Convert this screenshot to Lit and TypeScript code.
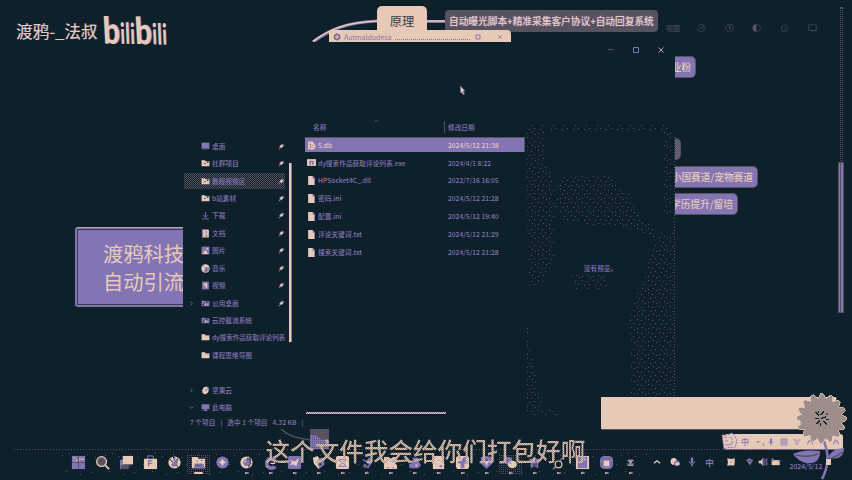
import { LitElement, html, css, svg, nothing } from "lit";
import { customElement, property } from "lit/decorators.js";
import { classMap } from "lit/directives/class-map.js";

const C = "#e6cab7";
const P = "#8374b4";
const G = "#56525f";
const D = "#0e212b";

const glyphs: Record<string, unknown> = {
  desktop: svg`<path fill=${P} d="M1 1h14v11H1z"/><path fill=${C} d="M3 3h1.500v1.500H3z"/><path stroke=${G} d="M2 13h12"/>`,
  folder: svg`<path fill=${C} d="M1 2h6l1 2h7v9H1z"/><path fill=${P} d="M10 4h5v1.5h-5zM14 12h1v1h-1z"/><path fill=${D} d="M6 7h2v2H6zM11 5h2v2h-2z"/>`,
  folderPlain: svg`<path fill=${C} d="M1 2h6l1 2h7v9H1z"/><path fill=${P} d="M8 4h7v1.5H8z"/>`,
  folderDim: svg`<path fill=${P} d="M1 3h6l1 1h7v9H1z"/><path fill=${D} d="M5 6h2v2H5zM9 5h2v2H9zM3 9h2v2H3z"/><path fill=${C} d="M7 8h2v3H7zM11 9h1v2h-1z"/>`,
  download: svg`<path fill="none" stroke=${P} stroke-width="1.5" d="M8 1v10M4 7l4 4 4-4M2 14h12"/>`,
  doc: svg`<path fill=${C} d="M2 1h12v14H2z"/><path fill=${P} d="M2 1h2v14H2zM8 4h3v2H8zM8 8h3v1H8z"/><path fill=${G} d="M8 11h3v2H8z"/>`,
  picture: svg`<path fill=${P} d="M1 1h14v14H1z"/><path fill=${C} d="M2 14l6-7 5 7zM10 3h3v3h-3z"/>`,
  music: svg`<circle cx="8" cy="8" r="7.500" fill=${C}/><path fill=${P} d="M8 8l6-3v6l-5 4H5zM4 3h2v2H4z"/><path fill=${D} d="M8 6h2v2H8zM5 10h1v1H5z"/>`,
  video: svg`<path fill=${P} d="M2 1h12v14H2z"/><path fill=${C} d="M5 4h6v8H8V8H5z"/>`,
  nut: svg`<path fill=${C} d="M5 2l6-1 3 4-1 6-5 4-5-2-1-5z"/><path fill=${P} d="M10 2h3l1 5-2-1z"/><path fill=${D} d="M8 6h2v2H8z"/>`,
  pc: svg`<path fill=${P} d="M1 2h14v9h-5v2h2v1H4v-1h2v-2H1z"/>`,
  file: svg`<path fill=${C} d="M2 0h8l4 4v12H2z"/><path fill=${P} d="M10 0l4 4v12h-1.3V5H10z"/>`,
  exe: svg`<path fill=${C} d="M0 2h16v12H0z"/><path fill=${P} d="M4 5h8v7H4z"/><path fill=${C} d="M7 8h2v4H7z"/>`,
  db: svg`<path fill=${C} d="M2 1h8l3 4v10H2z"/><circle cx="10" cy="9" r="5" fill=${C}/><path fill=${G} d="M5 5h2v2H5zM9 7h2v1H9zM6 9h2v2H6zM10 11h2v1h-2z"/><path fill=${P} d="M4 12h2v1H4zM12 5h1v2h-1z"/>`,
  start: svg`<path fill=${P} d="M1 1h14v14H1z"/><path fill=${C} d="M3 2h1v2H3zM5 5h2v1H5zM9 3h1v3H9zM11 4h3v1h-3zM3 6h1v1H3z"/><path stroke=${G} d="M8 1v14M1 8h14"/>`,
  search: svg`<circle cx="7" cy="7" r="5.2" fill=${G} stroke=${C} stroke-width="1.4"/><path stroke=${C} stroke-width="2" d="M11 11l4 4"/>`,
  tasks: svg`<path fill=${P} d="M1 5h9v10H1z"/><path fill=${G} d="M2 11h8v4H2z"/><path fill=${C} d="M4 1h11v9H4z"/><path fill=${G} d="M4 10h8v2H4z"/>`,
  store: svg`<path fill="none" stroke=${P} d="M5 4V1h6v3"/><path fill=${C} d="M1 4h14v11H1z"/><path fill="none" stroke=${P} stroke-width="1.3" d="M6 12V6h4M6 9h4"/>`,
  globe: svg`<circle cx="8" cy="8" r="6.5" fill=${C}/><path fill=${P} d="M7 1h2v5l3-1-1 6-4 2-3-3 3-2z"/><path stroke=${D} d="M3 4l3 4M7 1v3M12 3l-2 3M10 11l2 2"/>`,
  explorer: svg`<path fill=${C} d="M1 2h6l1 2h7v10H1z"/><path fill=${P} d="M4 9h9l2 5H3z"/><path stroke=${G} d="M5 11h6"/><path fill=${D} d="M6 6h1v1H6zM11 5h1v1h-1z"/>`,
  diamond: svg`<circle cx="8" cy="8" r="6.5" fill=${P}/><path fill=${C} d="M8 4l1.500 2.500L12 8 9.500 9 8 12 6.500 9 4 8l2.500-1.500z"/>`,
  chrome: svg`<circle cx="8" cy="8" r="6.5" fill=${C}/><path fill=${G} d="M8 3h5v6l-3 5z"/><circle cx="8" cy="8" r="3.6" fill=${P}/><circle cx="6.500" cy="7" r="1" fill=${C}/>`,
  edge: svg`<path fill="none" stroke=${P} stroke-width="4" d="M13 12A5 5 0 1 1 13 6"/><path fill=${C} d="M8 8h5v1.500H8zM3 12h2v1H3z"/><path fill=${D} d="M9 7h3v1H9z"/>`,
  bird: svg`<rect x="1" y="1" width="14" height="14" rx="2" fill=${P}/><path fill=${C} d="M3 5l5 2 5-4-3 9-3-2-4 1 2-3z"/>`,
  shield: svg`<path fill=${C} d="M2 3l5-2 2 3 5-1v7l-6 5-5-6z"/><path fill=${P} d="M9 4l5-1v7l-5 4-2-4z"/><path fill=${D} d="M8 5h3v2H8zM9 9h2v2H9z"/>`,
  mail: svg`<rect x="1" y="1" width="14" height="14" rx="2" fill=${C}/><path fill="none" stroke=${P} d="M4 5h8M4 5l4 4 4-4M4 12l3-3M12 12l-3-3M4 12h8"/>`,
  swirl: svg`<path fill=${P} d="M3 4l5 2 3-4 3 6-4 6-6-2 2-3z"/><path stroke=${D} stroke-width="2" d="M3 6l7 5"/><path fill=${G} d="M5 12h4v2H5z"/>`,
  puzzle: svg`<path fill=${C} d="M1 2h5l2 2 3-2h4v5l-2 2 2 2v4H1z"/><path fill=${P} d="M5 5h1v1H5zM4 13h2v1H4zM10 13h2v1h-2z"/><path fill=${G} d="M8 6h1v1H8z"/>`,
  cloud: svg`<path fill=${P} d="M6 3h6l1 5 2 3-3 3H3l-1-4 4-2z"/><path fill=${C} d="M3 6h3v2H3zM9 10h2v2H9z"/>`,
  note: svg`<path fill=${C} d="M2 1h12v14H2z"/><path fill=${P} d="M2 2h2v2H2zM8 5h1v1H8zM5 9h1v1H5zM9 11h3v2H9z"/>`,
  cross: svg`<rect x="1" y="1" width="14" height="14" rx="3" fill=${C}/><path fill=${P} d="M9 2h3v4h2v3h-4v5H6V9H3V7l4-1z"/>`,
  guard: svg`<path fill=${P} d="M2 2l6-1 6 1v7l-6 6-6-6z"/><path fill=${C} d="M4 4l4 3 3-2-3 7-1-3z"/><path fill=${D} d="M7 5h2v1H7z"/>`,
  wechat: svg`<ellipse cx="5.5" cy="6" rx="4.5" ry="4" fill=${P}/><ellipse cx="10" cy="10" rx="4.8" ry="4" fill=${C}/><path fill=${D} d="M4 5h1v1H4zM7 8h1v1H7z"/>`,
  star: svg`<path fill=${P} d="M2 4h4l2-3 2 3h5l-3 5v5l-4-2-4 2V9z"/><path fill=${G} d="M6 9h5v3H6z"/><path fill=${C} d="M6 6h2v2H6zM10 5h1v1h-1z"/>`,
  key: svg`<circle cx="8" cy="10" r="3.6" fill="none" stroke=${C} stroke-width="1.3"/><path stroke=${P} stroke-width="1.5" d="M5 13l-3 2M10 6l2-3"/>`,
  word: svg`<path fill=${C} d="M1 1h14v14H1z"/><path fill=${P} d="M3 2h10v12H3z"/><path fill=${C} d="M7 3h1v4H7zM10 3h1v3h-1z"/>`,
  chip: svg`<rect x="1" y="1" width="14" height="14" rx="5" fill=${P}/><path stroke=${G} d="M5 3v2M8 3v2M11 3v2M3 8v3M13 8v3"/><path fill=${C} d="M5 6h6v6H5z"/>`,
  cap: svg`<path fill=${C} d="M5 5h6v1H5zM5 10h6v1.500H5z"/><path fill=${P} d="M4 6h8L8 8.500zM4 9h8v1H4z"/><path fill=${C} d="M7 7h2v2H7z"/>`,
  up: svg`<path fill="none" stroke=${C} stroke-width="2" d="M3 10l5-4 5 4"/>`,
  chat: svg`<ellipse cx="6" cy="7" rx="5" ry="5.500" fill=${C}/><circle cx="11" cy="10" r="4.500" fill=${P}/><path fill=${C} d="M9 9h6v4H9z"/>`,
  mic: svg`<path fill=${P} d="M6 1h4v9H6z"/><path fill="none" stroke=${P} stroke-width="1.6" d="M3 7l5 6 5-6M8 12v3"/>`,
  flowerTiny: svg`<path fill=${C} d="M2 2l6 1 6-1v6l-1 6-5-1-6 1 1-6z"/><path fill=${P} d="M7 7h2v2H7zM11 4h1v1h-1z"/>`,
  wifi: svg`<path fill=${P} d="M2 5l5-3 6 3-5 8z"/><path fill=${G} d="M6 5h4v3H6z"/>`,
  sound: svg`<path fill=${C} d="M1 6h3l4-4v12l-4-4H1z"/><path fill=${P} d="M7 2h2v12H7z"/><path fill="none" stroke=${P} stroke-width="1.5" d="M11 3v10M14 2v12"/>`,
  battery: svg`<path fill=${C} d="M1 5h13v8H1z"/><path fill=${P} d="M1 2h3v5H1zM12 5h3v3h-3z"/>`,
  grid: svg`<path fill="none" stroke=${P} stroke-width="1.5" d="M2 2h12v12H2zM5 7h6v4H5zM2 4h12"/>`,
  heart: svg`<path fill="none" stroke=${P} stroke-width="1.8" stroke-dasharray="2 1" d="M2 2l6 12 6-12M5 3l3 4 3-4"/>`,
  person: svg`<path fill="none" stroke=${P} stroke-width="2" d="M3 13l2-7h6l2 7M8 3v3"/>`,
  pin: svg`<path fill=${C} d="M8 3l5 4-2 1-3 4-5-4z"/><path stroke=${P} stroke-width="2.500" d="M7 9l-5 5M10 2l4 4"/>`,
  ghostA: svg`<path fill="none" stroke=${G} stroke-width="1.5" stroke-dasharray="2 1" d="M2 3h12v9H2zM5 12l3 2 3-2"/>`,
  ghostB: svg`<circle cx="8" cy="8" r="6" fill="none" stroke=${G} stroke-width="1.5" stroke-dasharray="2 1"/><path fill="none" stroke=${G} stroke-width="1.5" d="M8 4v5h3"/>`,
  ghostC: svg`<circle cx="8" cy="8" r="6" fill="none" stroke=${G} stroke-width="1.5" stroke-dasharray="2 1"/><path fill=${G} d="M8 2v12a6 6 0 0 1 0-12z"/>`,
  ghostD: svg`<path fill="none" stroke=${G} stroke-width="1.5" stroke-dasharray="2 1" d="M2 8l6-5 6 5M4 9v4h8V9M7 9h3"/>`,
  ghostE: svg`<path fill="none" stroke=${G} stroke-width="1.5" stroke-dasharray="2 1" d="M3 5l4-3 5 2 2 5-5 5-5-1-2-4M6 7l3 2 3-3"/>`,
};

@customElement("ui-icon")
class UiIcon extends LitElement {
  @property() name = "";
  static styles = css`
    :host { display: block; flex: none; width: 9px; height: 9px; }
    svg { display: block; width: 100%; height: 100%; }
  `;
  render() {
    return html`<svg viewBox="0 0 16 16">${glyphs[this.name] ?? nothing}</svg>`;
  }
}

const places = [
  { icon: "desktop", label: "桌面", pin: true },
  { icon: "folder", label: "社群项目", pin: true },
  { icon: "folder", label: "教程视频区", pin: true, active: true },
  { icon: "folder", label: "b站素材", pin: true },
  { icon: "download", label: "下载", pin: true },
  { icon: "doc", label: "文档", pin: true },
  { icon: "picture", label: "图片", pin: true },
  { icon: "music", label: "音乐", pin: true },
  { icon: "video", label: "视频", pin: true },
  { icon: "folderDim", label: "公用桌面", pin: true, caret: "right" },
  { icon: "folderDim", label: "云控截流系统" },
  { icon: "folderPlain", label: "dy搜索作品获取评论列表" },
  { icon: "folderPlain", label: "课程思维导图" },
  { gap: true },
  { icon: "nut", label: "坚果云", caret: "right" },
  { icon: "pc", label: "此电脑", caret: "down" },
] as Array<{ icon?: string; label?: string; pin?: boolean; active?: boolean; caret?: string; gap?: boolean }>;

const files = [
  ["db", "5.db", "2024/5/12 21:38"],
  ["exe", "dy搜索作品获取评论列表.exe", "2024/4/1 8:22"],
  ["file", "HPSocket4C_.dll", "2022/7/16 16:05"],
  ["file", "密码.ini", "2024/5/12 21:28"],
  ["file", "配置.ini", "2024/5/12 19:40"],
  ["file", "评论关键词.txt", "2024/5/12 21:29"],
  ["file", "搜索关键词.txt", "2024/5/12 21:28"],
];

@customElement("file-explorer")
class FileExplorer extends LitElement {
  static styles = css`
    :host {
      display: grid; grid-template-rows: 16px 357px 15px; background: #0e212b; color: #8374b4;
      font: 500 6.7px/1 "Noto Sans CJK SC", "Noto Sans", sans-serif; overflow: hidden; white-space: nowrap;
    }
    .controls { display: flex; justify-content: flex-end; align-items: center; padding: 0 11px 0 0; gap: 19px; }
    .controls svg { width: 6px; height: 6px; display: block; }
    .body { display: grid; grid-template-columns: 122px 221px 149px; min-height: 0; }
    .side { display: flex; padding-top: 79.5px; gap: 3px; }
    .places { width: 103px; }
    .place { height: 17.43px; display: flex; align-items: center; box-sizing: border-box; padding: 0 1px 0 6px; }
    .active { background: repeating-conic-gradient(#56525f 0 25%, #0e212b 0 50%) 0 0 / 2px 2px; background-clip: content-box; }
    .place.active { padding: 1px 1px 1px 1px; }
    .place.active .caret { margin-left: 5px; }
    .caret { flex: none; width: 12px; height: 5px; }
    .caret svg { width: 5px; height: 5px; display: block; }
    .label { flex: 1; margin-left: 2px; line-height: 9px; letter-spacing: -0.03px; min-width: 0; }
    .long { letter-spacing: -0.13px; }
    .pin { width: 7px; height: 7px; }
    .bar { width: 2.500px; height: 179px; margin-top: 25px; background: #e6cab7; border-right: 1px solid #8374b4; box-sizing: border-box; }
    .list { padding-top: 60px; display: flex; flex-direction: column; }
    .caretup { align-self: flex-start; width: 5px; height: 3px; margin: 1px 0 0 69px; display: block; }
    .head { display: flex; height: 12px; align-items: center; margin-top: -1px; }
    .head .name { width: 131px; padding-left: 8px; box-sizing: content-box; }
    .date { border-left: 1px solid #56525f; height: 12px; line-height: 12px; padding-left: 3px; }
    .rows { margin-top: 4px; }
    .row { height: 17.9px; display: flex; align-items: center; }
    .row.sel { background: #8374b4; color: #e6cab7; height: 15px; margin-bottom: 2px; border-right: 1px solid #56525f; border-top: 1px solid #56525f; width: 220px; box-sizing: border-box; }
    .row ui-icon { margin-left: 2px; }
    .fname { width: 130px; margin-left: 2px; }
    .hbar { height: 2.5px; width: 140px; margin: auto 0 2px 1px; background: repeating-conic-gradient(#e6cab7 0 25%, #8374b4 0 50%) 0 0 / 2px 2px; }
    .preview { display: flex; justify-content: center; align-items: flex-start; margin-top: 65px; position: relative; }
    .grain { position: absolute; inset: 0; width: 149px; height: 292px; }
    .empty { margin-top: 142px; }
    .status { padding-left: 7px; display: flex; gap: 5px; align-items: center; }
  `;
  render() {
    const caret = (d?: string) =>
      html`<span class="caret">${d
        ? html`<svg viewBox="0 0 6 6"><path d=${d === "right" ? "M2 1l2 2-2 2" : "M1 2l2 2 2-2"} fill="none" stroke=${P} /></svg>`
        : nothing}</span>`;
    return html`
      <div class="controls">
        <svg viewBox="0 0 6 6"><path d="M0 2.5h5v1" fill="none" stroke=${G} /></svg>
        <svg viewBox="0 0 6 6"><path d="M.5.5h5v5h-5z" fill="none" stroke=${P} /></svg>
        <svg viewBox="0 0 6 6"><path d="M.5.5l5 5M5.5.5l-5 5" stroke="#b8a2b8" /></svg>
      </div>
      <div class="body">
        <div class="side">
          <div class="places">
            ${places.map((p) =>
              p.gap
                ? html`<div class="place"></div>`
                : html`<div class=${classMap({ place: true, active: !!p.active })}>
                    ${caret(p.caret)}<ui-icon name=${p.icon!}></ui-icon><span class=${classMap({ label: true, long: p.label!.length > 9 })}>${p.label}</span>
                    ${p.pin ? html`<ui-icon class="pin" name="pin"></ui-icon>` : nothing}
                  </div>`
            )}
          </div>
          <div class="bar"></div>
        </div>
        <div class="list">
          <svg class="caretup" viewBox="0 0 5 3"><path d="M.5 2.5L2.5 1l2 1.5" fill="none" stroke=${G} /></svg>
          <div class="head"><span class="name">名称</span><span class="date">修改日期</span></div>
          <div class="rows">
            ${files.map(
              ([icon, name, date], i) => html`<div class=${classMap({ row: true, sel: i === 0 })}>
                <ui-icon name=${icon}></ui-icon><span class="fname">${name}</span><span>${date}</span>
              </div>`
            )}
          </div>
          <div class="hbar"></div>
        </div>
        <div class="preview">
          <svg class="grain" viewBox="0 0 149 292">
            <defs>
              <pattern id="g" width="11" height="13" patternUnits="userSpaceOnUse">
                <path fill=${G} d="M1 1h1v1H1zM5 2h1v1H5zM8 5h1v1H8zM3 6h1v1H3zM6 9h1v1H6zM1 10h1v1H1zM9 11h1v1H9z" />
              </pattern>
            </defs>
            <path fill="url(#g)" d="M1 2h18v38l9 16v78l-12 26-14 6zM20 2h118l8 8v80h-8V8H20zM32 54l50-2 22 18 6 20 18 16 2 10-20-8-20-6-28 0-20-4-12-14zM42 150h38l2 16H50zM147 110v182h-42v-72l-4-12 10-38 14-36 8-24zM1 200l8 50 6 32 20 10H1z" />
            <path stroke=${G} stroke-dasharray="1 2" d="M148.500 14v276" />
          </svg>
          <span class="empty">没有预览。</span>
        </div>
      </div>
      <div class="status"><span>7 个项目</span><span>|</span><span>选中 1 个项目</span><span>4.32 KB</span><span>|</span></div>
    `;
  }
}

const apps = [
  "start", "search", "tasks", "store", "globe", "explorer", "diamond", "chrome", "edge", "bird", "shield", "mail",
  "swirl", "puzzle", "cloud", "note", "cross", "guard", "wechat", "star", "key", "word", "chip", "cap",
];

const petals = Array.from({ length: 16 }, (_, i) => {
  const at = (r: number, a: number) => `${(25 + r * Math.cos(a)).toFixed(1)} ${(26 + r * Math.sin(a)).toFixed(1)}`;
  const a = (i * Math.PI) / 8;
  return `${i ? "L" : "M"}${at(25, a - 0.05)}L${at(25, a + 0.07)}L${at(20.5, a + Math.PI / 16)}`;
}).join("") + "Z";

@customElement("app-root")
class AppRoot extends LitElement {
  static styles = css`
    :host {
      display: block; position: relative; width: 852px; height: 480px; overflow: hidden; background: #0e212b;
      color: #e6cab7; font-family: "Noto Sans CJK SC", "Noto Sans", sans-serif; white-space: nowrap; line-height: 1;
    }
    .layer { position: absolute; display: block; }
    .mark { left: 16px; top: 14px; display: flex; align-items: flex-start; gap: 7px; }
    .author { font-size: 16.6px; line-height: 34px; text-shadow: 0.5px 0 #8374b4; }
    .logo { display: flex; align-items: baseline; font-family: Lato, sans-serif; line-height: 32px; height: 32px; transform: rotate(1deg); text-shadow: 1px 0 #8374b4; }
    .logo .tall { font-size: 37px; font-weight: 900; display: block; transform: scaleX(0.8) skewX(5deg); transform-origin: 0 100%; width: 17px; }
    .logo .short { font-size: 29px; font-weight: 700; letter-spacing: 0.5px; display: block; transform: scaleX(0.64) skewX(5deg); transform-origin: 0 100%; width: 15px; }
    .principle { left: 377px; top: 6px; width: 50px; height: 30px; border-radius: 5px 5px 0 0; background: #e6cab7; color: #393947; font-size: 12.2px; line-height: 31px; text-align: center; }
    .summary { left: 445px; top: 10px; width: 213px; height: 22px; box-sizing: border-box; border-radius: 4px; background: #56525f; padding-left: 4px; font-size: 9.7px; font-weight: 500; line-height: 22px; text-shadow: 0 0 1px #8374b4, 0 0 1px #8374b4; }
    .popup { left: 329px; top: 30px; width: 182px; height: 12px; box-sizing: border-box; padding: 2px 7px 0 4px; gap: 3px; background: #e6cab7; border-radius: 2px 4px 0 0; display: flex; align-items: center; color: #8374b4; font-size: 7px; overflow: hidden; }
    .popup .fill { flex: 1; height: 1px; margin-top: 5px; background: repeating-linear-gradient(90deg, #8374b4 0 1px, transparent 1px 2px); }
    .popup svg { width: 8px; height: 8px; }
    .node { box-sizing: border-box; background: #8374b4; border: 1px solid #56525f; border-radius: 5px; text-align: right; font-size: 9.7px; font-weight: 500; line-height: 21px; padding-right: 4px; height: 22px; }
    .n1 { left: 655px; top: 56px; width: 41px; }
    .n2 { left: 650px; top: 138px; width: 31px; background: repeating-conic-gradient(#56525f 0 25%, #70668c 0 50%) 0 0 / 2px 2px; }
    .n3 { left: 640px; top: 166px; width: 118px; }
    .n4 { left: 640px; top: 193px; width: 98px; }
    .root { left: 75px; top: 227px; width: 180px; height: 80px; box-sizing: border-box; border: 1px solid #8374b4; border-top-color: #b5a0b8; border-radius: 3px; background: #8374b4; box-shadow: inset 0 0 0 1px #8374b4, inset 0 0 0 2px #393947; font-size: 20.3px; line-height: 27.5px; padding: 12px 0 0 27px; }
    .explorer { left: 183px; top: 42px; width: 492px; height: 388px; display: grid; }
    .tools { left: 666px; top: 23px; display: flex; gap: 16.8px; align-items: center; color: #56525f; font-size: 7px; }
    .tools ui-icon { width: 11px; height: 10px; }
    .tools span { width: 13px; }
    .scroll { left: 838px; top: 6px; width: 6px; height: 307px; display: flex; flex-direction: column; align-items: center; }
    .track { width: 3px; flex: 1; background: radial-gradient(circle at 0.5px 0.5px, #56525f 0.6px, transparent 0.8px) 0 0 / 2px 2px; }
    .thumb { width: 6px; height: 151px; box-sizing: border-box; border: 1px solid #56525f; background: linear-gradient(90deg, #8374b4 1px, #56525f 1px 2px, #8374b4 2px); }
    .banner { left: 601px; top: 397px; width: 235px; height: 32px; background: #e6cab7; box-shadow: 1px 1px #56525f; }
    .ime { left: 724px; top: 434px; width: 119px; height: 16px; box-sizing: border-box; background: #e6cab7; border-bottom: 1px solid #8374b4; border-radius: 3px; display: flex; align-items: center; gap: 5px; padding-left: 17px; color: #8374b4; font-size: 8px; font-weight: 500; }
    .ime ui-icon { width: 8px; height: 8px; }
    .ime span { width: 8px; text-align: center; }
    .cat { left: 721px; top: 432px; width: 17px; height: 18px; }
    .plant { left: 790px; top: 392px; width: 60px; height: 88px; }
    .horizon { left: 14px; top: 449px; width: 830px; height: 1px; background: repeating-linear-gradient(90deg, #56525f 0 1px, transparent 1px 3px); }
    .dust { left: 60px; top: 452px; width: 590px; height: 25px; }
    .thumbnail { left: 278px; top: 429px; width: 52px; height: 21px; }
    .caption { left: 265.500px; top: 434px; font-size: 24.6px; font-weight: 500; line-height: 32px; color: transparent; background: repeating-conic-gradient(#e6cab7 0 25%, #a18f88 0 50%) 0 0 / 2px 2px; background-clip: text; -webkit-background-clip: text; }
    .taskbar { left: 66.500px; top: 455px; display: flex; }
    .app { width: 24px; display: flex; flex-direction: column; align-items: center; gap: 2px; }
    .app ui-icon { width: 15px; height: 15px; }
    .dot { width: 4px; height: 2px; background: #8374b4; box-shadow: inset 1px 0 #e6cab7; border-radius: 1px; }
    .wide { width: 9px; background: #e6cab7; box-shadow: none; }
    .focus { background: radial-gradient(circle at 0.5px 0.5px, #56525f 0.6px, transparent 0.8px) 0 0 / 2px 2px; }
    .tray { left: 652px; top: 457px; display: flex; align-items: center; gap: 7.5px; color: #8374b4; font-size: 8.500px; font-weight: 700; }
    .tray ui-icon, .tray span { width: 10px; height: 10px; line-height: 10px; text-align: center; }
    .tray .weather { margin-left: 3.500px; }
    .status { display: flex; gap: 3px; margin-left: 2px; }
    .date { left: 789.500px; top: 462px; font-size: 6.9px; font-weight: 500; line-height: 8px; color: #8374b4; }
    .cursor { left: 460px; top: 86px; width: 6px; height: 9px; }
  `;
  render() {
    return html`
      <div class="layer mark">
        <span class="author">渡鸦-_法叔</span>
        <span class="logo"><span class="tall">b</span><span class="short">ili</span><span class="tall">b</span><span class="short">ili</span></span>
      </div>
      <svg class="layer" width="852" height="60" viewBox="0 0 852 60">
        <path d="M313 42C328 31 346 22 378 21M427 21.500h18" fill="none" stroke=${P} stroke-width="3" />
        <path d="M313 41.500C328 30 346 22 378 21M427 21h18" fill="none" stroke=${C} stroke-width="1.700" />
      </svg>
      <div class="layer principle">原理</div>
      <div class="layer tools">
        <span>视图</span>
        ${["ghostE", "ghostB", "ghostC", "ghostD", "ghostA"].map((n) => html`<ui-icon name=${n}></ui-icon>`)}
      </div>
      <div class="layer summary">自动曝光脚本+精准采集客户协议+自动回复系统</div>
      <div class="layer popup">
        <svg viewBox="0 0 8 8"><circle cx="4" cy="4" r="3" fill=${P} stroke=${G} stroke-dasharray="2 1" /><path d="M4 2v4M2 4h4" stroke=${C} /></svg>
        <span>Autmaldudesa</span><i class="fill"></i>
        <svg viewBox="0 0 8 8"><path d="M2 2h4v4H2z" fill="none" stroke=${P} /></svg>
        <svg viewBox="0 0 8 8"></svg>
        <svg viewBox="0 0 8 8"><path d="M2 2l4 4M6 2L2 6" stroke=${P} stroke-dasharray="1 .6" /></svg>
      </div>
      <div class="layer node n1">业粉</div>
      <div class="layer node n2"></div>
      <div class="layer node n3">小国赛道/宠物赛道</div>
      <div class="layer node n4">学历提升/留培</div>
      <div class="layer root">渡鸦科技<br />自动引流</div>
      <file-explorer class="layer explorer"></file-explorer>
      <svg class="layer cursor" viewBox="0 0 6 9"><path d="M.5 0l4.500 5H3l1.500 3-1.500.5L2 6 .5 7z" fill=${C} stroke=${P} stroke-width=".5" /></svg>
      <div class="layer scroll">
        <svg width="5" height="4" viewBox="0 0 5 4"><path d="M1 3l1.500-2L4 3" fill="none" stroke=${P} /></svg>
        <i class="track"></i><i class="thumb"></i>
      </div>
      <div class="layer banner"></div>
      <div class="layer ime">
        <span>中</span><span>•,</span>
        ${["mic", "grid", "heart", "person", "person", "person"].map((n) => html`<ui-icon name=${n}></ui-icon>`)}
      </div>
      <svg class="layer cat" viewBox="0 0 17 18">
        <path d="M1 3l5 0 5-2 3 3 2 5-2 7-5-1-6 2-1-7z" fill=${C} stroke=${P} stroke-dasharray="2 1" />
        <path d="M3 5l3 1M8 5l4 2M4 9h3M10 10h3M4 13l8-1" stroke=${P} stroke-width=".8" />
      </svg>
      <div class="layer horizon"></div>
      <svg class="layer dust" viewBox="0 0 590 25">
        <defs>
          <pattern id="dust" width="43" height="25" patternUnits="userSpaceOnUse">
            <path fill=${G} d="M2 3h1v1H2zM9 1h1v1H9zM16 4h1v1h-1zM27 2h1v1h-1zM35 5h1v1h-1zM6 19h1v1H6zM20 22h1v1h-1zM31 20h1v1h-1zM40 12h1v1h-1z" />
          </pattern>
        </defs>
        <path fill="url(#dust)" d="M0 0h590v25H0z" />
      </svg>
      <svg class="layer thumbnail" viewBox="0 0 52 21">
        <defs>
          <pattern id="mix" width="2" height="2" patternUnits="userSpaceOnUse"><path fill=${P} d="M0 0h2v2H0z" /><path fill=${G} d="M0 0h1v1H0z" /></pattern>
        </defs>
        <path d="M3 0q9 9 30 11" fill="none" stroke=${G} stroke-width="1.500" />
        <path d="M32 0h19v20H32z" fill=${G} /><path d="M32 6l5 0 8 5h6v9H32z" fill="url(#mix)" />
      </svg>
      <div class="layer taskbar">
        ${apps.map(
          (n, i) => html`<div class=${classMap({ app: true, focus: i === 5 || i === 18 })}>
            <ui-icon name=${n}></ui-icon>${i > 4 && i !== 6 ? html`<i class=${classMap({ dot: true, wide: i === 5 })}></i>` : nothing}
          </div>`
        )}
      </div>
      <div class="layer caption">这个文件我会给你们打包好啊</div>
      <div class="layer tray">
        <ui-icon name="up"></ui-icon><ui-icon name="chat"></ui-icon><ui-icon name="mic"></ui-icon><span>中</span>
        <ui-icon class="weather" name="flowerTiny"></ui-icon>
        <div class="status"><ui-icon name="wifi"></ui-icon><ui-icon name="sound"></ui-icon><ui-icon name="battery"></ui-icon></div>
      </div>
      <svg class="layer plant" viewBox="0 0 60 88">
        <defs>
          <pattern id="weave" width="2" height="2" patternUnits="userSpaceOnUse">
            <path fill=${C} d="M0 0h2v2H0z" /><path fill=${G} d="M0 0h1v1H0zM1 1h1v1H1z" />
          </pattern>
        </defs>
        <path d="M34 50q8 18-2 37" fill="none" stroke=${P} stroke-width="2.500" />
        <path d="M3 62q10-5 27-3 0 14-14 12-8-2-13-9zM38 66q4-10 16-10 0 13-16 10z" fill=${P} />
        <path d="M6 63q12 3 22-1M40 67q8-3 13-7" stroke=${G} stroke-width="1.500" fill="none" />
        <g transform="translate(6.500 .5)" shape-rendering="crispEdges">
          <path d=${petals} fill="url(#weave)" stroke=${C} stroke-width=".8" />
          <path d="M19 20l4 3M27 19l-3 4M18 26h4M25 26l5-2M20 31l4-3M27 29l4 3M24 33v-3M31 21l-2 2M22 18v2M32 27h-3" stroke=${D} stroke-width="1.300" />
        </g>
        <path d="M36 67h5v6h-5z" fill=${C} />
      </svg>
      <div class="layer date">2024/5/12</div>
    `;
  }
}
